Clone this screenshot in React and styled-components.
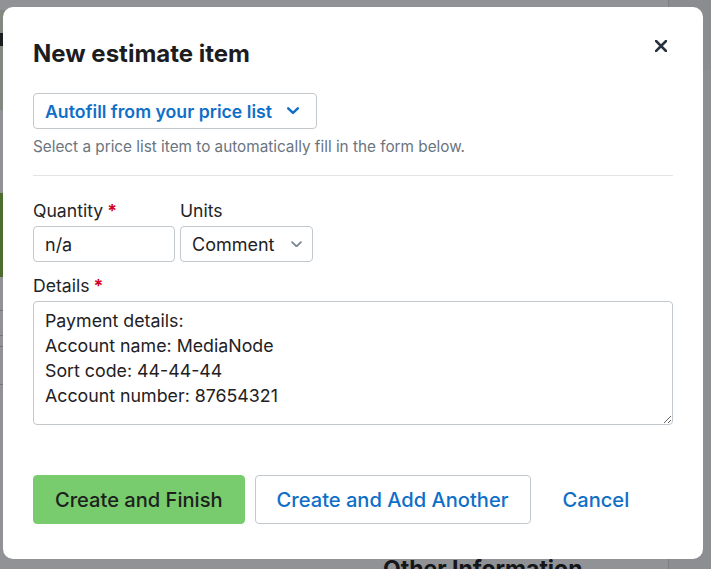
import styled, { createGlobalStyle } from "styled-components";

const GlobalStyle = createGlobalStyle`
  html, body {
    margin: 0;
    padding: 0;
    height: 100%;
    overflow: hidden;
  }
  body {
    font-family: Inter, "Noto Sans", sans-serif;
    background: #ffffff;
  }
  * {
    box-sizing: border-box;
  }
`;

/* underlying app page, seen dimmed behind the modal */
const Page = styled.div`
  display: grid;
  grid-template-columns: 669px 1fr;
  height: 569px;
  background: #ffffff;
`;

const MainColumn = styled.div`
  display: flex;
  flex-direction: column;
  border-right: 1px solid #dcdde0;
`;

const Banner = styled.div`
  margin-top: 10px;
  height: 100px;
  background: #e6eedb;
  padding-top: 23px;
`;

const BannerStripe = styled.div`
  height: 13px;
  background: #2e3131;
`;

const GreenBlock = styled.div`
  margin-top: 83px;
  height: 84px;
  background: #87bd4a;
`;

const PageRule = styled.div`
  height: 1px;
  margin-top: ${(props) => props.gap}px;
  background: #c9cbce;
`;

const PageHeading = styled.h2`
  margin: auto 0 0;
  padding-left: 383px;
  height: 14px;
  overflow: hidden;
  font-family: Inter, sans-serif;
  font-size: 23px;
  line-height: 28px;
  font-weight: 700;
  color: #222;
`;

const SidePanel = styled.div`
  display: flex;
  flex-direction: column;
`;

const SideTop = styled.div`
  height: 70px;
  background: #f3f4f5;
`;

const SideRest = styled.div`
  flex: 1;
  background: #f8f8f9;
`;

const Overlay = styled.div`
  position: fixed;
  inset: 0;
  display: flex;
  padding: 7px 8px 10px 3px;
  background: rgba(4, 6, 14, 0.44);
`;

const Modal = styled.div`
  flex: 1;
  display: flex;
  flex-direction: column;
  background: #ffffff;
  border-radius: 10px;
  padding: 33px 30px 35px;
`;

const Header = styled.div`
  display: flex;
  align-items: flex-start;
  justify-content: space-between;
`;

const Title = styled.h1`
  margin: 0;
  font-size: 24px;
  line-height: 28px;
  font-weight: 700;
  color: #1d1d1f;
`;

const CloseButton = styled.button`
  display: flex;
  align-items: center;
  justify-content: center;
  width: 14px;
  height: 14px;
  margin: -1px 5px 0 0;
  padding: 0;
  border: none;
  background: none;
  color: #27323c;
  cursor: pointer;
`;

const AutofillButton = styled.button`
  align-self: flex-start;
  display: flex;
  align-items: center;
  justify-content: space-between;
  width: 284px;
  height: 36px;
  margin-top: 25px;
  padding: 0 17px 0 11px;
  border: 1px solid #c3c8cd;
  border-radius: 4px;
  background: #ffffff;
  font-family: inherit;
  font-size: 17.7px;
  font-weight: 600;
  color: #0f6fc8;
  cursor: pointer;
`;

const Help = styled.p`
  margin: 8px 0 0;
  font-size: 15.3px;
  line-height: 20px;
  color: #6a7580;
`;

const Divider = styled.hr`
  margin: 18px 0 0;
  border: none;
  border-top: 1px solid #e2e4e6;
`;

const FieldRow = styled.div`
  display: flex;
  gap: 5px;
  margin-top: 24px;
`;

const Field = styled.label`
  display: flex;
  flex-direction: column;
  gap: 4px;
  width: ${(props) => props.width || "auto"};
  margin-top: ${(props) => props.top || 0}px;
`;

const Label = styled.span`
  font-size: 17.6px;
  line-height: 22px;
  color: #222427;
`;

const Required = styled.span`
  color: #d0021b;
  font-weight: 700;
  margin-left: 4px;
`;

const TextInput = styled.input`
  width: 100%;
  height: 36px;
  padding: 0 11px;
  border: 1px solid #c3c8cd;
  border-radius: 4px;
  font-family: inherit;
  font-size: 18px;
  color: #1f2124;
  outline: none;
`;

const SelectBox = styled.div`
  display: flex;
  align-items: center;
  justify-content: space-between;
  height: 36px;
  padding: 0 10px 0 11px;
  border: 1px solid #c3c8cd;
  border-radius: 4px;
  font-size: 18px;
  color: #1f2124;
`;

const TextArea = styled.textarea`
  width: 100%;
  height: 124px;
  padding: 6px 11px;
  border: 1px solid #c3c8cd;
  border-radius: 4px;
  font-family: inherit;
  font-size: 17.8px;
  line-height: 25px;
  color: #1f2124;
  resize: vertical;
  outline: none;
`;

const Actions = styled.div`
  display: flex;
  gap: 10px;
  margin-top: auto;
`;

const Button = styled.button`
  height: 49px;
  padding: 0 21px;
  border-radius: 4px;
  font-family: inherit;
  font-size: 20.1px;
  font-weight: 500;
  cursor: pointer;
  border: 1px solid
    ${(props) =>
      props.variant === "primary"
        ? "#78cc6e"
        : props.variant === "link"
        ? "transparent"
        : "#c3c8cd"};
  background: ${(props) => (props.variant === "primary" ? "#78cc6e" : "#ffffff")};
  color: ${(props) => (props.variant === "primary" ? "#1d1f1d" : "#0f6fc8")};
`;

const ChevronDown = ({ size = 12, stroke = 2.4, color = "currentColor" }) => (
  <svg width={size} height={size * 0.6} viewBox="0 0 12 7" fill="none">
    <path
      d="M1.2 1.2 6 5.8 10.8 1.2"
      stroke={color}
      strokeWidth={stroke}
      strokeLinecap="round"
      strokeLinejoin="round"
    />
  </svg>
);

const CloseIcon = () => (
  <svg width="12" height="12" viewBox="0 0 12 12" fill="none">
    <path d="M1 1l10 10M11 1 1 11" stroke="currentColor" strokeWidth="2.6" strokeLinecap="square" />
  </svg>
);

const details = `Payment details:
Account name: MediaNode
Sort code: 44-44-44
Account number: 87654321`;

export default function App() {
  return (
    <>
      <GlobalStyle />
      <Page>
        <MainColumn>
          <Banner>
            <BannerStripe />
          </Banner>
          <GreenBlock />
          <PageRule gap={33} />
          <PageRule gap={24} />
          <PageRule gap={10} />
          <PageRule gap={37} />
          <PageHeading>Other Information</PageHeading>
        </MainColumn>
        <SidePanel>
          <SideTop />
          <SideRest />
        </SidePanel>
      </Page>

      <Overlay>
        <Modal>
          <Header>
            <Title>New estimate item</Title>
            <CloseButton aria-label="Close">
              <CloseIcon />
            </CloseButton>
          </Header>

          <AutofillButton>
            Autofill from your price list
            <ChevronDown size={12} stroke={2.4} />
          </AutofillButton>
          <Help>Select a price list item to automatically fill in the form below.</Help>
          <Divider />

          <FieldRow>
            <Field width="142px">
              <Label>
                Quantity<Required>*</Required>
              </Label>
              <TextInput defaultValue="n/a" />
            </Field>
            <Field width="133px">
              <Label>Units</Label>
              <SelectBox>
                Comment
                <ChevronDown size={11} stroke={2} color="#7d8792" />
              </SelectBox>
            </Field>
          </FieldRow>

          <Field top={13}>
            <Label>
              Details<Required>*</Required>
            </Label>
            <TextArea defaultValue={details} />
          </Field>

          <Actions>
            <Button variant="primary">Create and Finish</Button>
            <Button>Create and Add Another</Button>
            <Button variant="link">Cancel</Button>
          </Actions>
        </Modal>
      </Overlay>
    </>
  );
}
